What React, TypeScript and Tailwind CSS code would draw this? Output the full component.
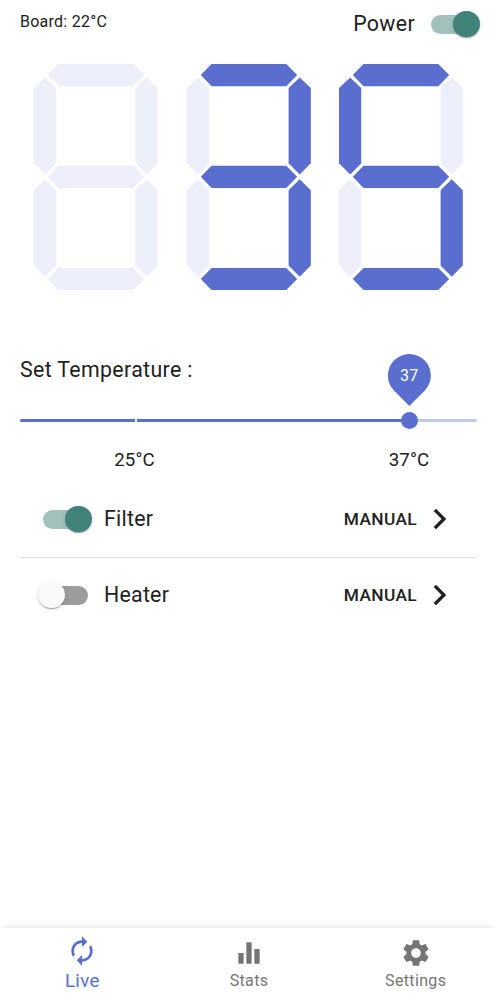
import { MdAutorenew, MdEqualizer, MdSettings } from "react-icons/md";
import clsx from "clsx";

type SegmentName = "a" | "b" | "c" | "d" | "e" | "f" | "g";

const SEGMENTS: Record<SegmentName, string> = {
  a: "14,11.3 24.7,0.2 99.5,0.2 110.4,11.3 99.5,22.4 24.7,22.4",
  f: "11.4,13.6 22.4,24.3 22.4,99.4 11.4,110.8 0.2,99.4 0.2,24.3",
  b: "112.9,13.6 124,24.3 124,99.4 112.9,110.8 101.8,99.4 101.8,24.3",
  g: "14,113 24.7,101.9 99.5,101.9 110.4,113 99.5,124.1 24.7,124.1",
  e: "11.4,115.5 22.4,126.4 22.4,201.6 11.4,212.9 0.2,201.6 0.2,126.4",
  c: "112.9,115.5 124,126.4 124,201.6 112.9,212.9 101.8,201.6 101.8,126.4",
  d: "14,215.2 24.7,204.1 99.5,204.1 110.4,215.2 99.5,226.3 24.7,226.3",
};

const DIGITS: Record<string, string> = { " ": "", "3": "abgcd", "5": "afgcd" };

function Digit({ value }: { value: string }) {
  return (
    <svg width="125" height="227" viewBox="0.2 0.2 125 227" className="shrink-0 overflow-visible">
      {(Object.keys(SEGMENTS) as SegmentName[]).map((name) => (
        <polygon
          key={name}
          points={SEGMENTS[name]}
          className={DIGITS[value].includes(name) ? "fill-[#5a6ecf]" : "fill-[#edf0fa]"}
        />
      ))}
    </svg>
  );
}

function Switch({ on }: { on: boolean }) {
  return (
    <div className={clsx("flex h-[27px] w-[54px] items-center", on ? "justify-end" : "justify-start")}>
      <div
        className={clsx(
          "flex h-[19px] w-[45.3px] items-center rounded-full",
          on ? "mr-[4px] justify-end bg-[#a0c1bc]" : "ml-[5px] bg-[#9c9c9c]",
        )}
      >
        <div
          className={clsx(
            "size-[26.7px] shrink-0 rounded-full shadow-[0_2px_1px_-1px_rgba(0,0,0,0.2),0_1px_1px_rgba(0,0,0,0.14),0_1px_4px_rgba(0,0,0,0.12)]",
            on ? "-mr-[4px] bg-[#41837a]" : "-ml-[5px] bg-[#fafafa]",
          )}
        />
      </div>
    </div>
  );
}

function DeviceRow({ label, on }: { label: string; on: boolean }) {
  return (
    <div className="flex h-[75px] items-center pl-[18px] pr-[25px]">
      <Switch on={on} />
      <span className="ml-[12px] text-[21.33px] leading-8 tracking-[0.25px]">{label}</span>
      <button className="ml-auto flex items-center gap-[11px] text-[17.33px] font-medium tracking-[0.35px]">
        <span className="pt-px">MANUAL</span>
        <svg width="24" height="24" viewBox="0 0 24 24" className="fill-current stroke-current stroke-[0.5]">
          <path d="M5.88 4.12 13.76 12l-7.88 7.88L8 22l10-10L8 2z" />
        </svg>
      </button>
    </div>
  );
}

export default function App() {
  return (
    <div className="flex h-[1000px] w-[496px] flex-col overflow-hidden bg-white font-[Roboto,sans-serif] text-[#212121]">
      <header className="flex h-[48px] items-start justify-between pl-5 pr-4">
        <span className="mt-[12px] text-base leading-5 tracking-[0.25px]">Board: 22°C</span>
        <div className="flex h-[48px] items-center">
          <span className="mr-[11px] text-[21.33px] leading-8 tracking-[0.35px]">Power</span>
          <Switch on />
        </div>
      </header>

      <section className="mt-[15.5px] flex gap-[27.5px] pl-[34px]">
        {[" ", "3", "5"].map((d, i) => (
          <Digit key={i} value={d} />
        ))}
      </section>

      <section className="mt-[63px] h-[128px] px-5">
        <h2 className="text-[21.33px] leading-8 tracking-[0.35px]">Set Temperature :</h2>
        <div className="relative mt-[33.5px] h-[3px] w-[457px] rounded-full bg-[#c0c8ec]">
          <div className="h-full w-[389px] rounded-full bg-[#5a6ecf]" />
          <div className="absolute left-[114.5px] top-0 h-[3px] w-[2.5px] bg-white" />
          <div className="absolute -top-[7px] left-[381px] size-[16.5px] rounded-full bg-[#5a6ecf]" />
          <div className="absolute -top-[65.5px] left-[368px] flex size-[42.7px] rotate-45 items-center justify-center rounded-full rounded-br-none bg-[#5a6ecf]">
            <span className="-rotate-45 pt-px text-base tracking-[0.2px] text-white">37</span>
          </div>
          <span className="absolute left-[114.5px] top-[27px] -translate-x-1/2 text-[18.67px] leading-7 tracking-[0.1px]">25°C</span>
          <span className="absolute left-[389px] top-[27px] -translate-x-1/2 text-[18.67px] leading-7 tracking-[0.1px]">37°C</span>
        </div>
      </section>

      <section className="ml-5 mr-[19px]">
        <DeviceRow label="Filter" on />
        <hr className="border-t border-[#e0e0e0]" />
        <DeviceRow label="Heater" on={false} />
      </section>

      <nav className="mt-auto flex h-[72px] justify-center bg-white pl-[2px] shadow-[0_0_10px_-1px_rgba(0,0,0,0.15)]">
        <button className="flex w-[166.7px] shrink-0 flex-col items-center pt-[7px] text-[#5a6ecf]">
          <MdAutorenew size={32} />
          <span className="text-[18.67px] leading-[28px] tracking-[0.3px]">Live</span>
        </button>
        <button className="flex w-[166.7px] shrink-0 flex-col items-center pt-[9px] text-[#757575]">
          <MdEqualizer size={32} />
          <span className="text-base leading-[23px] tracking-[0.35px]">Stats</span>
        </button>
        <button className="flex w-[166.7px] shrink-0 flex-col items-center pt-[9px] text-[#757575]">
          <MdSettings size={32} />
          <span className="text-base leading-[23px] tracking-[0.35px]">Settings</span>
        </button>
      </nav>
    </div>
  );
}
